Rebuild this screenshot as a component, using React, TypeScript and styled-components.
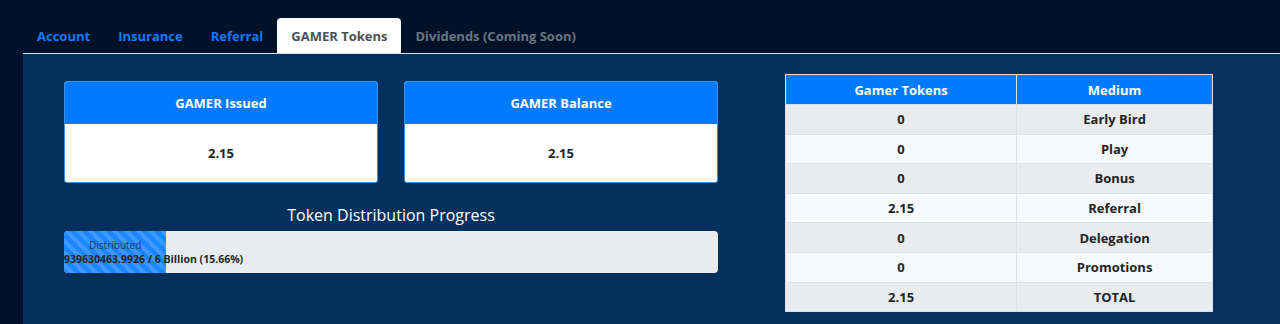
import React from "react";
import styled, { createGlobalStyle } from "styled-components";

const Global = createGlobalStyle`
  html, body { margin: 0; padding: 0; }
  body {
    background: #00112a;
    font-family: "Open Sans", "Noto Sans", sans-serif;
    width: 1280px;
    height: 324px;
    overflow: hidden;
  }
`;

const Page = styled.div`
  padding-top: 18px;
  height: 306px;
  display: flex;
  flex-direction: column;
`;

const TabBar = styled.div`
  display: flex;
  margin-left: 23px;
  height: 35px;
  border-bottom: 1px solid #c9e2f2;
`;

const Tab = styled.div<{ $active?: boolean; $disabled?: boolean }>`
  padding: 0 14px;
  display: flex;
  align-items: center;
  font-size: 13px;
  font-weight: 700;
  color: ${(p) => (p.$active ? "#495057" : p.$disabled ? "#6c757d" : "#0d7bff")};
  background: ${(p) => (p.$active ? "#ffffff" : "transparent")};
  border-radius: 4px 4px 0 0;
`;

const Panel = styled.div`
  flex: 1;
  margin-left: 23px;
  background: linear-gradient(90deg, #04305d 0%, #05315f 60%, #07325f 100%);
  display: flex;
  padding: 20px 0 0 41px;
`;

const LeftCol = styled.div`
  width: 654px;
  padding-top: 7px;
  display: flex;
  flex-direction: column;
`;

const Cards = styled.div`
  display: flex;
  gap: 26px;
`;

const Card = styled.div`
  width: 314px;
  height: 102px;
  box-sizing: border-box;
  border: 1px solid #3d8fe0;
  border-radius: 3px;
  overflow: hidden;
  display: flex;
  flex-direction: column;
  background: #ffffff;
`;

const CardHeader = styled.div`
  height: 42px;
  background: #007bff;
  color: #ffffff;
  font-size: 13px;
  font-weight: 700;
  display: flex;
  align-items: center;
  justify-content: center;
`;

const CardBody = styled.div`
  flex: 1;
  display: flex;
  align-items: center;
  justify-content: center;
  padding-bottom: 1px;
  font-size: 13px;
  font-weight: 700;
  color: #212529;
`;

const ProgressTitle = styled.div`
  margin-top: 21px;
  text-align: center;
  color: #ffffff;
  font-size: 16px;
  line-height: 22px;
`;

const ProgressTrack = styled.div`
  margin-top: 5px;
  height: 42px;
  background: #e9ecef;
  border-radius: 4px;
  display: flex;
  overflow: visible;
`;

const ProgressFill = styled.div`
  height: 100%;
  border-radius: 4px 0 0 4px;
  background-color: #1c86ff;
  background-image: linear-gradient(
    45deg,
    rgba(255, 255, 255, 0.15) 25%,
    transparent 25%,
    transparent 50%,
    rgba(255, 255, 255, 0.15) 50%,
    rgba(255, 255, 255, 0.15) 75%,
    transparent 75%,
    transparent
  );
  background-size: 12px 12px;
  display: flex;
  flex-direction: column;
  align-items: center;
  justify-content: center;
  white-space: nowrap;
`;

const FillLabel = styled.div`
  font-size: 10px;
  line-height: 14px;
  color: #153a6b;
`;

const FillValue = styled.div`
  align-self: flex-start;
  font-size: 10.5px;
  line-height: 14px;
  font-weight: 700;
  color: #212529;
`;

const RightCol = styled.div`
  margin-left: 67px;
`;

const Table = styled.table`
  border-collapse: collapse;
  width: 428px;
  font-size: 13px;
  font-weight: 700;
  color: #212529;
  border: 1px solid #dee2e6;
`;

const Th = styled.th<{ $w: number }>`
  width: ${(p) => p.$w}px;
  height: 29px;
  padding: 0;
  background: #007bff;
  color: #ffffff;
  border: 1px solid #dee2e6;
  border-top: none;
  font-weight: 700;
`;

const Tr = styled.tr<{ $odd: boolean }>`
  background: ${(p) => (p.$odd ? "#e9ebed" : "#f7f8f9")};
`;

const Td = styled.td`
  height: 28.6px;
  padding: 0;
  text-align: center;
  border: 1px solid #dee2e6;
`;

const rows: [string, string][] = [
  ["0", "Early Bird"],
  ["0", "Play"],
  ["0", "Bonus"],
  ["2.15", "Referral"],
  ["0", "Delegation"],
  ["0", "Promotions"],
  ["2.15", "TOTAL"],
];

export default function App() {
  const pct = 15.66;
  return (
    <>
      <Global />
      <Page>
        <TabBar>
          <Tab>Account</Tab>
          <Tab>Insurance</Tab>
          <Tab>Referral</Tab>
          <Tab $active>GAMER Tokens</Tab>
          <Tab $disabled>Dividends (Coming Soon)</Tab>
        </TabBar>
        <Panel>
          <LeftCol>
            <Cards>
              <Card>
                <CardHeader>GAMER Issued</CardHeader>
                <CardBody>2.15</CardBody>
              </Card>
              <Card>
                <CardHeader>GAMER Balance</CardHeader>
                <CardBody>2.15</CardBody>
              </Card>
            </Cards>
            <ProgressTitle>Token Distribution Progress</ProgressTitle>
            <ProgressTrack>
              <ProgressFill style={{ width: `${pct}%` }}>
                <FillLabel>Distributed</FillLabel>
                <FillValue>939630463.9926 / 6 Billion (15.66%)</FillValue>
              </ProgressFill>
            </ProgressTrack>
          </LeftCol>
          <RightCol>
            <Table>
              <thead>
                <tr>
                  <Th $w={232}>Gamer Tokens</Th>
                  <Th $w={196}>Medium</Th>
                </tr>
              </thead>
              <tbody>
                {rows.map((r, i) => (
                  <Tr key={i} $odd={i % 2 === 0}>
                    <Td>{r[0]}</Td>
                    <Td>{r[1]}</Td>
                  </Tr>
                ))}
              </tbody>
            </Table>
          </RightCol>
        </Panel>
      </Page>
    </>
  );
}
